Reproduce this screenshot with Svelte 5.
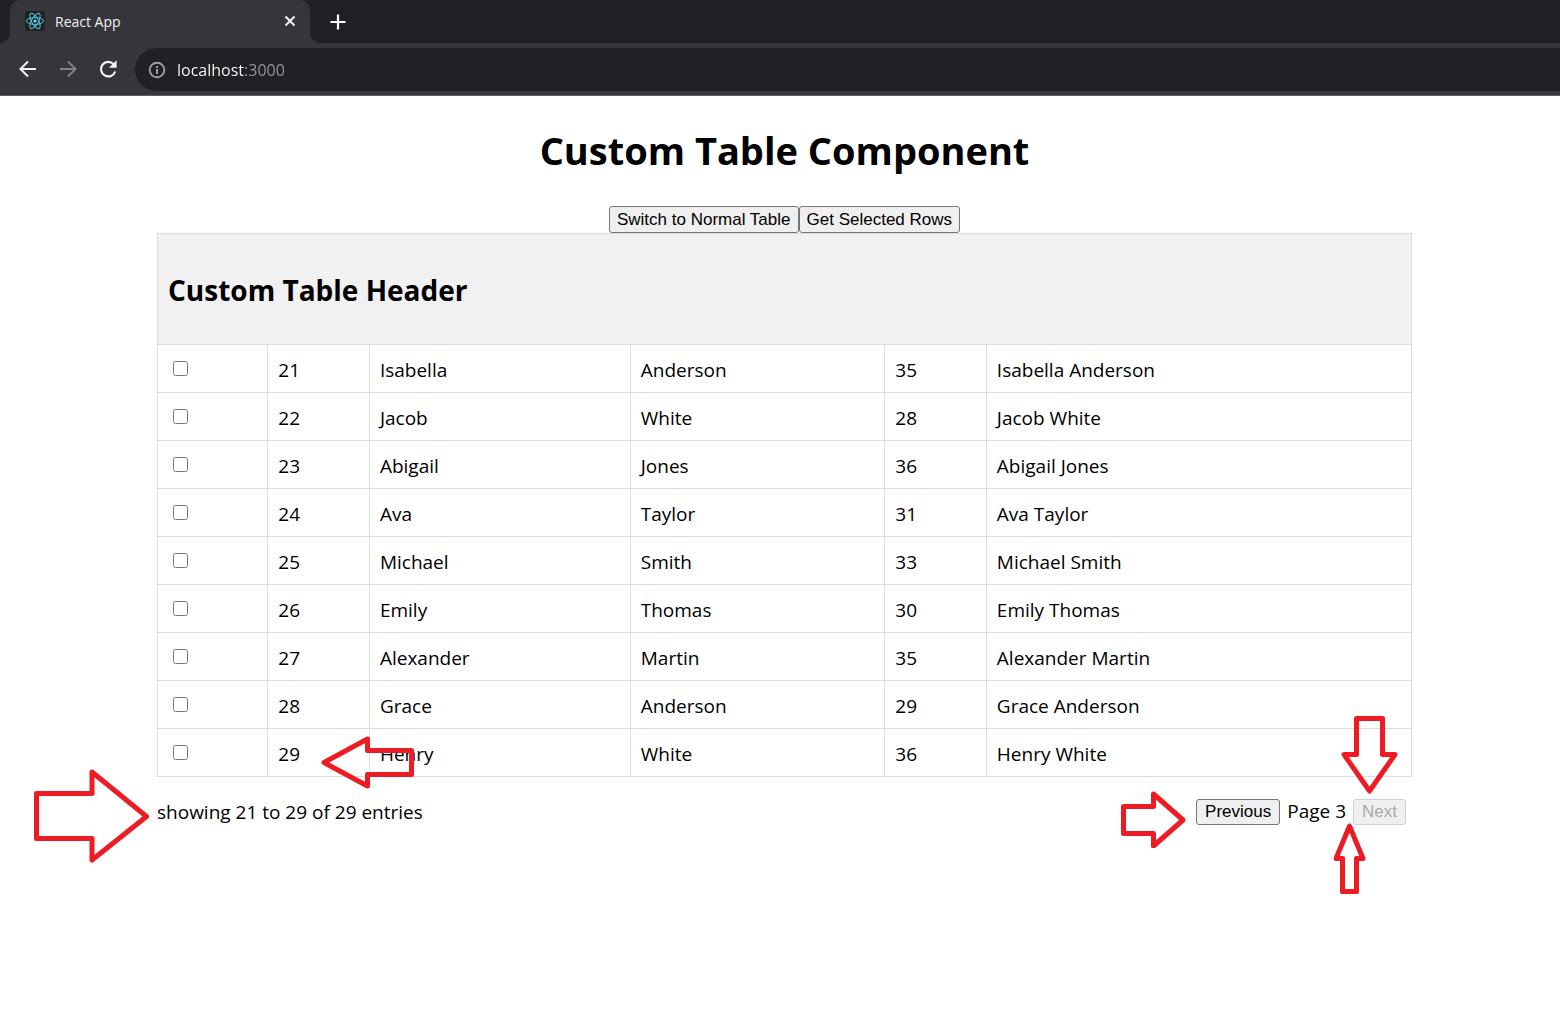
<script>
  const columns = ['select', 'id', 'first', 'last', 'age', 'full'];

  const rows = [
    { id: 21, first: 'Isabella', last: 'Anderson', age: 35 },
    { id: 22, first: 'Jacob', last: 'White', age: 28 },
    { id: 23, first: 'Abigail', last: 'Jones', age: 36 },
    { id: 24, first: 'Ava', last: 'Taylor', age: 31 },
    { id: 25, first: 'Michael', last: 'Smith', age: 33 },
    { id: 26, first: 'Emily', last: 'Thomas', age: 30 },
    { id: 27, first: 'Alexander', last: 'Martin', age: 35 },
    { id: 28, first: 'Grace', last: 'Anderson', age: 29 },
    { id: 29, first: 'Henry', last: 'White', age: 36 }
  ];

  let address = $state('localhost:3000');
  let selected = $state([]);
</script>

<div class="page">
  <header class="browser">
    <div class="tabs">
      <div class="tab">
        <svg class="favicon" viewBox="0 0 20 20" aria-hidden="true">
          <rect width="20" height="20" rx="2" fill="#222222" />
          <g fill="none" stroke="#53c1de" stroke-width="1">
            <ellipse cx="10" cy="10" rx="8.6" ry="3.4" />
            <ellipse cx="10" cy="10" rx="8.6" ry="3.4" transform="rotate(60 10 10)" />
            <ellipse cx="10" cy="10" rx="8.6" ry="3.4" transform="rotate(120 10 10)" />
          </g>
          <circle cx="10" cy="10" r="1.6" fill="#61dafb" />
        </svg>
        <span class="tab-title">React App</span>
        <button class="icon-button close" aria-label="Close tab">
          <svg viewBox="0 0 12 12" width="12" height="12"><path d="M1.5 1.5l9 9M10.5 1.5l-9 9" stroke="#f1f3f4" stroke-width="2" /></svg>
        </button>
      </div>
      <button class="icon-button new-tab" aria-label="New tab">
        <svg viewBox="0 0 16 16" width="16" height="16"><path d="M8 .5v15M.5 8h15" stroke="#ffffff" stroke-width="2.2" /></svg>
      </button>
    </div>
    <div class="toolbar">
      <nav class="nav" aria-label="Browser">
        <button class="icon-button" aria-label="Back">
          <svg viewBox="0 0 20 20" width="20" height="20"><path d="M18 10H3M10 2.5L2.5 10l7.500 7.500" fill="none" stroke="#f1f3f4" stroke-width="2" /></svg>
        </button>
        <button class="icon-button" aria-label="Forward">
          <svg viewBox="0 0 20 20" width="20" height="20"><path d="M2 10h15M10 2.500L17.500 10 10 17.500" fill="none" stroke="#828386" stroke-width="2" /></svg>
        </button>
        <button class="icon-button" aria-label="Reload">
          <svg viewBox="0 0 20 20" width="20" height="20">
            <path d="M17.200 12.500A7.300 7.300 0 1 1 15.500 5" fill="none" stroke="#f1f3f4" stroke-width="2.200" />
            <path d="M18.600 1.200v7.600H11z" fill="#f1f3f4" />
          </svg>
        </button>
      </nav>
      <label class="omnibox">
        <svg viewBox="0 0 18 18" width="18" height="18" aria-hidden="true">
          <circle cx="9" cy="9" r="7.300" fill="none" stroke="#9aa0a6" stroke-width="1.900" />
          <path d="M9 8v5M9 5v2" stroke="#9aa0a6" stroke-width="2" />
        </svg>
        <input type="text" aria-label="Address" bind:value={address} />
      </label>
    </div>
  </header>

  <main>
    <h1>Custom Table Component</h1>
    <div class="actions">
      <button>Switch to Normal Table</button>
      <button>Get Selected Rows</button>
    </div>
    <table>
      <colgroup>
        {#each columns as name}
          <col class={name} />
        {/each}
      </colgroup>
      <thead>
        <tr><th colspan="6"><h2>Custom Table Header</h2></th></tr>
      </thead>
      <tbody>
        {#each rows as row}
          <tr>
            <td><input type="checkbox" aria-label="Select row {row.id}" value={row.id} bind:group={selected} /></td>
            <td>{row.id}</td>
            <td>{row.first}</td>
            <td>{row.last}</td>
            <td>{row.age}</td>
            <td>{row.first} {row.last}</td>
          </tr>
        {/each}
      </tbody>
    </table>
    <footer>
      <span>showing 21 to 29 of 29 entries</span>
      <div class="pager">
        <button>Previous</button>
        <span>Page 3</span>
        <button disabled>Next</button>
      </div>
    </footer>
  </main>

  <svg class="arrow entries" viewBox="0 0 116 96" aria-hidden="true">
    <path d="M3.500 26.500H59V5l54.500 44.500L59 93V71.500H3.500z" />
  </svg>
  <svg class="arrow last-row" viewBox="0 0 94 54" aria-hidden="true">
    <path d="M4 27.500L47.500 4v11.500h44v24H47.500V51z" />
  </svg>
  <svg class="arrow previous" viewBox="0 0 66 58" aria-hidden="true">
    <path d="M3.500 16.500h30V4L63 30 33.500 56V43.500h-30z" />
  </svg>
  <svg class="arrow next-down" viewBox="0 0 58 80" aria-hidden="true">
    <path d="M16.500 3.500h26V39.500H55L29.500 76 4 39.500h12.500z" />
  </svg>
  <svg class="arrow next-up" viewBox="0 0 34 72" aria-hidden="true">
    <path d="M17.500 4L31 36.500h-6.500v33h-14v-33H4z" />
  </svg>
</div>

<style>
  :global(body) {
    margin: 0;
    background: #ffffff;
  }

  .page {
    position: relative;
    min-height: 100vh;
    font: 19px/27px 'Open Sans', 'Noto Sans', sans-serif;
    color: #000000;
  }

  .browser {
    background: #35363a;
    border-bottom: 1px solid #5d5e62;
  }

  .tabs {
    display: flex;
    height: 43px;
    padding-left: 10px;
    background: #202124;
  }

  .tab {
    position: relative;
    display: flex;
    align-items: center;
    box-sizing: border-box;
    width: 300px;
    padding: 0 14px 1px 15px;
    border-radius: 10px 10px 0 0;
    background: #35363a;
    color: #f1f3f4;
    font-size: 14px;
  }

  /* Flared feet where the active tab meets the toolbar */
  .tab::before,
  .tab::after {
    content: '';
    position: absolute;
    bottom: 0;
    width: 10px;
    height: 10px;
  }

  .tab::before {
    right: 100%;
    background: radial-gradient(circle at 0 0, #202124 10px, #35363a 10px);
  }

  .tab::after {
    left: 100%;
    background: radial-gradient(circle at 100% 0, #202124 10px, #35363a 10px);
  }

  .favicon {
    width: 20px;
    height: 20px;
  }

  .tab-title {
    flex: 1;
    margin-left: 10px;
  }

  .icon-button {
    display: flex;
    padding: 0;
    border: 0;
    background: none;
  }

  .new-tab {
    align-self: center;
    margin-left: 20px;
  }

  .toolbar {
    display: flex;
    align-items: center;
    height: 43px;
    padding: 5px 0 4px 18px;
  }

  .nav {
    display: flex;
    gap: 20px;
    margin-right: 17px;
    padding-bottom: 2px;
  }

  .omnibox {
    display: flex;
    flex: 1;
    align-items: center;
    gap: 11px;
    height: 43px;
    padding-left: 13px;
    border-radius: 22px 0 0 22px;
    background: #202124;
  }

  .omnibox input {
    flex: 1;
    padding: 0;
    border: 0;
    outline: 0;
    background: linear-gradient(to right, #ffffff 67px, #96989b 67px);
    background-clip: text;
    color: transparent;
    font: 16px/24px 'Open Sans', 'Noto Sans', sans-serif;
  }

  main {
    padding: 26px 148px 0 157px;
  }

  h1 {
    margin: 0 0 27px;
    font-size: 38px;
    line-height: 57px;
    text-align: center;
  }

  .actions {
    display: flex;
    justify-content: center;
  }

  .actions button,
  .pager button {
    padding: 2px 8px;
    border: 1px solid #767676;
    border-radius: 3px;
    background: #efefef;
    color: #000000;
    font: 17px/21px 'Liberation Sans', Arial, sans-serif;
  }

  .actions button {
    padding: 2px 7px;
  }

  .pager button {
    line-height: 20px;
  }

  .pager button:disabled {
    border-color: #d0d0d0;
    color: #a9a9a9;
  }

  table {
    width: 100%;
    border-collapse: collapse;
    table-layout: fixed;
  }

  .select {
    width: 8.8%;
  }

  .id,
  .age {
    width: 8.1%;
  }

  .first {
    width: 20.8%;
  }

  .last {
    width: 20.3%;
  }

  th,
  td {
    padding: 12px 10px 8px;
    border: 1px solid #dddddd;
    text-align: left;
  }

  th {
    background: #f1f1f1;
  }

  h2 {
    margin: 24px 0 26px;
    font-size: 28px;
    line-height: 40px;
  }

  td input {
    display: block;
    width: 15px;
    height: 15px;
    margin: 0 5px 4px;
  }

  footer {
    display: flex;
    justify-content: space-between;
    margin-top: 22px;
  }

  .pager {
    display: flex;
    align-items: flex-start;
    gap: 7px;
    margin-right: 6px;
  }

  .pager span {
    line-height: 24px;
  }

  .arrow {
    position: absolute;
    fill: none;
    stroke: #ed1c24;
    stroke-width: 5;
    stroke-linejoin: round;
    pointer-events: none;
  }

  .entries {
    top: 767px;
    left: 33px;
    width: 116px;
    height: 96px;
  }

  .last-row {
    top: 735px;
    left: 320px;
    width: 94px;
    height: 54px;
  }

  .previous {
    top: 790px;
    right: 374px;
    width: 66px;
    height: 58px;
  }

  .next-down {
    top: 715px;
    right: 162px;
    width: 58px;
    height: 80px;
  }

  .next-up {
    top: 822px;
    right: 194px;
    width: 34px;
    height: 72px;
  }
</style>
